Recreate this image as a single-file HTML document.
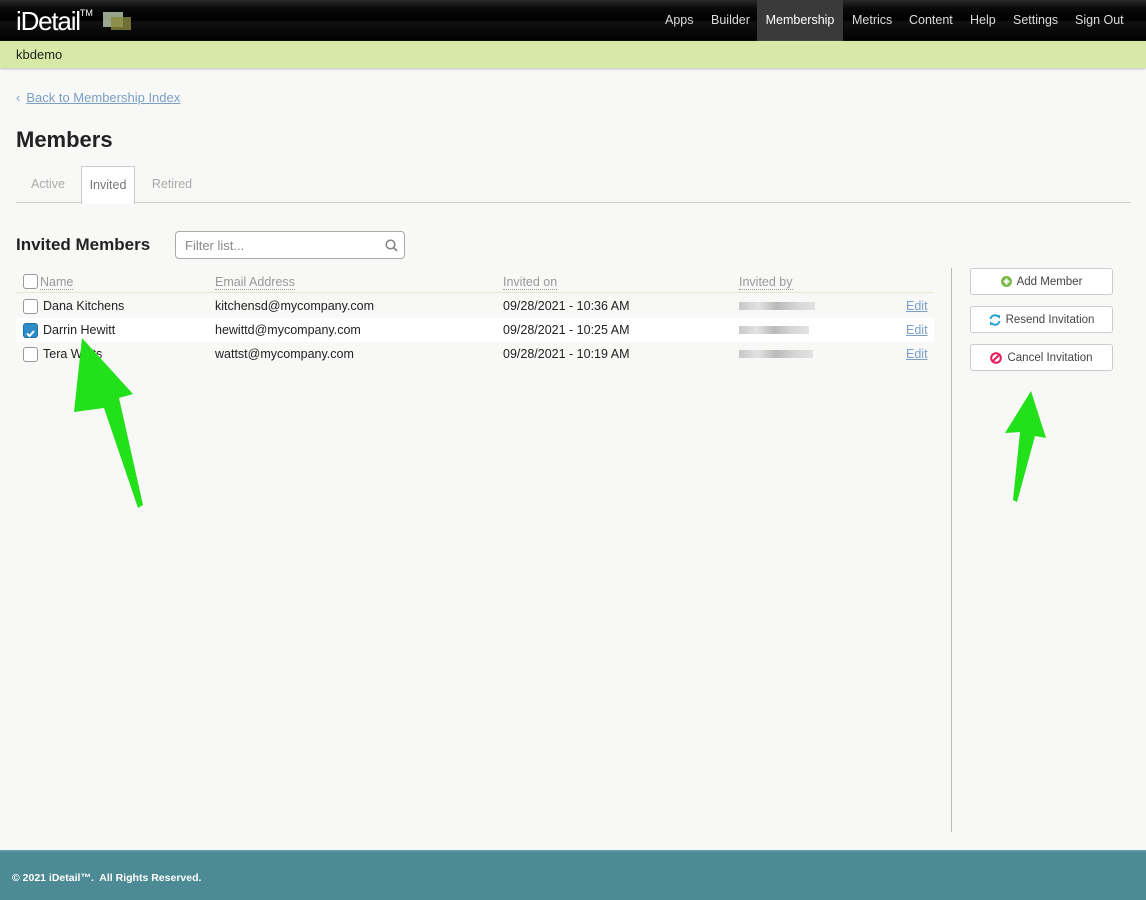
<!DOCTYPE html>
<html><head><style>
*{box-sizing:border-box;margin:0;padding:0}
body{width:1146px;height:900px;background:#f8f8f7;font-family:"Liberation Sans",sans-serif;position:relative;overflow:hidden;color:#222}
.nav{position:absolute;top:0;left:0;width:1146px;height:41px;background:linear-gradient(#2a2a2a 0,#0a0a0a 8px,#000 20px,#111 22px,#000 41px)}
.logo{position:absolute;left:16px;top:6px;color:#fff;font-size:26px;letter-spacing:-1.2px}
.logo sup{font-size:9px;vertical-align:top;position:relative;top:2px;letter-spacing:0}
.nav a{position:absolute;top:0;height:41px;line-height:41px;color:#ddd;font-size:12.5px;text-decoration:none}
.green{position:absolute;top:41px;left:0;width:1146px;height:27px;background:#d7e9a6;font-size:13px;padding:6px 0 0 16px;box-shadow:0 1px 2px #bbb}
.back{position:absolute;top:90px;left:16px;font-size:13px;color:#7aa0c8}
.back u{margin-left:6px}
h1{position:absolute;top:127px;left:16px;font-size:22px;font-weight:bold}
.tabs{position:absolute;top:202px;left:16px;width:1115px;border-top:1px solid #ccc}
.tab{position:absolute;top:166px;height:37px;line-height:37px;font-size:12.5px;color:#aaa;text-align:center}
h2{position:absolute;top:235px;left:16px;font-size:17px;font-weight:bold}
.filter{position:absolute;top:231px;left:175px;width:230px;height:28px;border:1px solid #aaa;border-radius:4px;background:#fff;font-size:13px;color:#888;padding:6px 9px}
.row{position:absolute;left:16px;width:918px;height:24px;font-size:12.5px;line-height:24px}
.row span{position:absolute}
.cb{position:absolute;left:7px;top:5px;width:15px;height:15px;border:1px solid #999;border-radius:3px;background:#fff}
.hd span{color:#999;border-bottom:1px dotted #999;line-height:14px;top:6px}
.edit{color:#7aa0c8;text-decoration:underline;left:890px}
.blur{height:8px;top:8px;background:linear-gradient(90deg,#bbb,#ddd,#aaa,#ccc,#ddd);opacity:.8}
.vline{position:absolute;left:951px;top:268px;width:1px;height:564px;background:#bbb}
.btn{position:absolute;left:970px;width:143px;height:27px;border:1px solid #ccc;border-radius:3px;background:#fff;font-size:11.5px;color:#444;display:flex;align-items:center;justify-content:center;gap:5px}
.foot{position:absolute;top:850px;left:0;width:1146px;height:50px;background:#4c8a94;border-top:2px solid #5a9ba3}
.foot div{position:absolute;top:20px;left:12px;font-size:10.5px;font-weight:bold;color:#fff}
</style></head><body>
<div class="nav">
<div class="logo">iDetail<sup>TM</sup></div>
<div style="position:absolute;left:103px;top:12px;width:20px;height:15px;background:#bdcfae;opacity:.8"></div>
<div style="position:absolute;left:111px;top:17px;width:20px;height:13px;background:#8a8a3c;opacity:.8"></div>
<a style="left:665px">Apps</a><a style="left:711px">Builder</a>
<a style="left:757px;width:86px;background:#3a3a3a;color:#fff;text-align:center">Membership</a>
<a style="left:852px">Metrics</a><a style="left:909px">Content</a><a style="left:970px">Help</a><a style="left:1013px">Settings</a><a style="left:1075px">Sign Out</a>
</div>
<div class="green">kbdemo</div>
<div class="back">‹<u>Back to Membership Index</u></div>
<h1>Members</h1>
<div class="tabs"></div>
<div class="tab" style="left:16px;width:64px">Active</div>
<div class="tab" style="left:81px;width:54px;background:#fff;border:1px solid #ccc;border-bottom:none;color:#777;height:38px">Invited</div>
<div class="tab" style="left:136px;width:72px">Retired</div>
<h2>Invited Members</h2>
<div class="filter">Filter list...
<svg style="position:absolute;right:6px;top:7px" width="13" height="13" viewBox="0 0 13 13"><circle cx="5.5" cy="5.5" r="4.3" fill="none" stroke="#888" stroke-width="1.6"/><path d="M8.5 8.5L12 12" stroke="#888" stroke-width="1.8"/></svg></div>
<div class="row hd" style="top:269px;border-bottom:1px solid #e3ebc8"><div class="cb"></div><span style="left:24px">Name</span><span style="left:199px">Email Address</span><span style="left:487px">Invited on</span><span style="left:723px">Invited by</span></div>
<div class="row" style="top:294px"><div class="cb"></div><span style="left:27px">Dana Kitchens</span><span style="left:199px">kitchensd@mycompany.com</span><span style="left:487px">09/28/2021 - 10:36 AM</span><span class="blur" style="left:723px;width:76px"></span><span class="edit">Edit</span></div>
<div class="row" style="top:318px;background:#fff"><div class="cb" style="background:#2e8dc8;border-color:#1b6ea3"><svg width="13" height="13" viewBox="0 0 13 13"><path d="M3 6.5l2.5 2.5 4.5-5" fill="none" stroke="#fff" stroke-width="2"/></svg></div><span style="left:27px">Darrin Hewitt</span><span style="left:199px">hewittd@mycompany.com</span><span style="left:487px">09/28/2021 - 10:25 AM</span><span class="blur" style="left:723px;width:70px"></span><span class="edit">Edit</span></div>
<div class="row" style="top:342px"><div class="cb"></div><span style="left:27px">Tera Watts</span><span style="left:199px">wattst@mycompany.com</span><span style="left:487px">09/28/2021 - 10:19 AM</span><span class="blur" style="left:723px;width:74px"></span><span class="edit">Edit</span></div>
<div class="vline"></div>
<div class="btn" style="top:268px"><svg width="11" height="11" viewBox="0 0 11 11"><circle cx="5.5" cy="5.5" r="5.5" fill="#7ab648"/><path d="M5.5 2.5v6M2.5 5.5h6" stroke="#fff" stroke-width="2"/></svg>Add Member</div>
<div class="btn" style="top:306px"><svg width="12" height="12" viewBox="0 0 12 12"><path d="M1.5 5A4.5 4.5 0 0 1 9.5 3" fill="none" stroke="#2aa7cf" stroke-width="2"/><path d="M7 1h4v4z" fill="#2aa7cf"/><path d="M10.5 7A4.5 4.5 0 0 1 2.5 9" fill="none" stroke="#2aa7cf" stroke-width="2"/><path d="M5 11H1V7z" fill="#2aa7cf"/></svg>Resend Invitation</div>
<div class="btn" style="top:344px"><svg width="12" height="12" viewBox="0 0 12 12"><circle cx="6" cy="6" r="4.8" fill="none" stroke="#e8185a" stroke-width="2"/><path d="M2.8 9.2L9.2 2.8" stroke="#e8185a" stroke-width="2"/></svg>Cancel Invitation</div>
<svg style="position:absolute;left:0;top:0" width="1146" height="900">
<polygon points="82,338 133,394 119,398 143,505 138,508 104,408 74,412" fill="#22e01a"/>
<polygon points="1031,391 1046,438 1035,436 1017,502 1013,500 1020,432 1005,433" fill="#22e01a"/>
</svg>
<div class="foot"><div>© 2021 iDetail™.&nbsp; All Rights Reserved.</div></div>
</body></html>
